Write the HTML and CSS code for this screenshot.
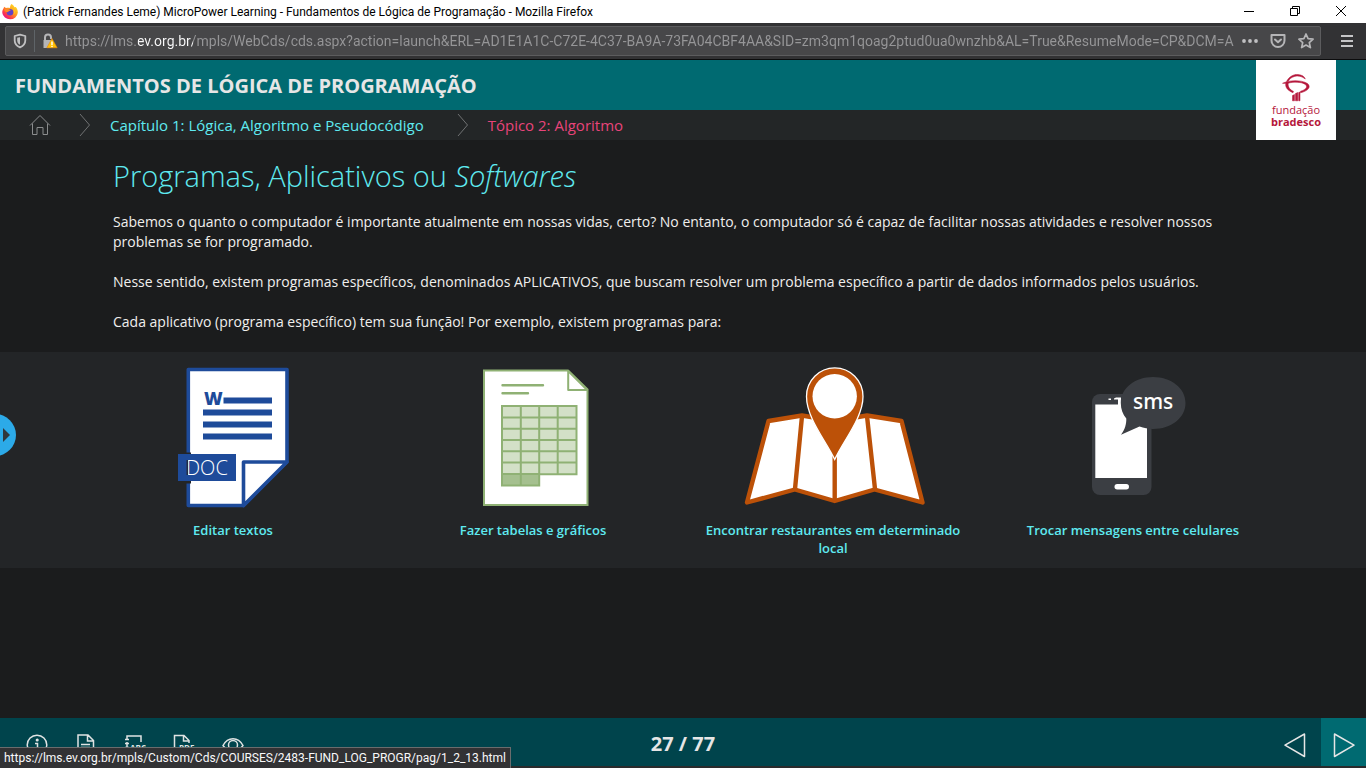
FILE: index.html
```html
<!DOCTYPE html>
<html lang="pt-BR">
<head>
<meta charset="utf-8">
<meta name="viewport" content="width=device-width, initial-scale=1">
<title>MicroPower Learning - Fundamentos de Lógica de Programação</title>
<link rel="stylesheet" href="styles.css">
</head>
<body class="window">
<div class="titlebar">
  <svg class="firefox" viewBox="0 0 16 16" aria-hidden="true">
    <defs>
      <linearGradient id="flame" x1="0.9" y1="0.1" x2="0.2" y2="0.9"><stop offset="0" stop-color="#ffe226"/><stop offset="0.45" stop-color="#ff9a1f"/><stop offset="0.8" stop-color="#ff3b47"/><stop offset="1" stop-color="#e31587"/></linearGradient>
    </defs>
    <path fill="url(#flame)" d="M9.500 0C11 1 12 2 12.600 3.300L13.800 3C15.200 4.700 16 6.500 15.800 8.800A7.800 7.200 0 0 1 .3 9C.1 7 .8 5.200 1.800 4L2 2.700 4 4C5.700 3.600 7 3.800 8 3.900 8 2.400 8.500 1 9.500 0Z"/>
    <circle cx="8" cy="8.300" r="3.300" fill="#6241c5"/>
    <path fill="#ff8b22" d="M2.300 5.200C5 4 7.500 5.200 8.800 6.400 7.300 6.500 6.500 7.500 5.200 8.300 3.500 8 2.300 7 2.300 5.200Z"/>
    <path fill="#ffc82a" d="M11 4.500C12.600 6 12.800 8.700 11.300 10.800 13.500 9.500 14 6.800 11 4.500Z"/>
  </svg>
  <span class="titlebar-text">(Patrick Fernandes Leme) MicroPower Learning - Fundamentos de Lógica de Programação - Mozilla Firefox</span>
  <div class="window-controls">
    <button type="button" aria-label="Minimizar"><svg viewBox="0 0 12 12"><path d="M1 6.500h10"/></svg></button>
    <button type="button" aria-label="Restaurar"><svg viewBox="0 0 12 12"><path d="M1.500 3.500h7v7h-7zM3.500 3.500v-2h7v7h-2"/></svg></button>
    <button type="button" aria-label="Fechar"><svg viewBox="0 0 12 12"><path d="M1 1l10 10M11 1L1 11"/></svg></button>
  </div>
</div>

<div class="toolbar">
  <div class="urlbar">
    <button type="button" class="tool shield" aria-label="Proteção contra rastreamento"><svg viewBox="0 0 16 16"><path fill="none" stroke="#c0c0c2" stroke-width="1.800" stroke-linejoin="round" d="M8 1.700L13.300 3v4.500c0 3-2 5.400-5.300 6.900-3.300-1.500-5.300-3.900-5.300-6.900V3z"/><path fill="#c0c0c2" d="M8 4.200v7.600C6 10.600 5.200 9.200 5.200 7.400V4.800z"/></svg></button>
    <button type="button" class="tool lock" aria-label="Informações do site"><svg viewBox="0 0 16 16"><path fill="none" stroke="#b5b5b7" stroke-width="2" d="M3 8V4.500a3 3 0 0 1 6 0V6"/><path fill="#b5b5b7" d="M1.500 7H11v8H1.500z"/><path fill="#ffbf00" stroke="#e5870b" stroke-width=".6" stroke-linejoin="round" d="M10 5.500l5.200 9.300H4.800z"/><path fill="#fff" d="M9.300 8.500h1.400V12H9.300zM9.300 12.800h1.400V14H9.300z"/></svg></button>
    <input class="url" type="text" aria-label="Endereço" value="https://lms.ev.org.br/mpls/WebCds/cds.aspx?action=launch&amp;ERL=AD1E1A1C-C72E-4C37-BA9A-73FA04CBF4AA&amp;SID=zm3qm1qoag2ptud0ua0wnzhb&amp;AL=True&amp;ResumeMode=CP&amp;DCM=A">
    <button type="button" class="tool" aria-label="Ações da página"><svg viewBox="0 0 16 16" fill="#c0c0c2"><circle cx="2" cy="8" r="1.900"/><circle cx="8" cy="8" r="1.900"/><circle cx="14" cy="8" r="1.900"/></svg></button>
    <button type="button" class="tool" aria-label="Salvar no Pocket"><svg viewBox="0 0 16 16" fill="none" stroke="#b5b5b7" stroke-width="2" stroke-linecap="round" stroke-linejoin="round"><path d="M1.500 2h13v5.500a6.500 6.500 0 0 1-13 0z"/><path d="M5 6.500l3 2.800 3-2.800"/></svg></button>
    <button type="button" class="tool" aria-label="Favoritar"><svg viewBox="0 0 16 16" fill="none" stroke="#b5b5b7" stroke-width="1.700" stroke-linejoin="round"><path d="M8 1l2.100 4.700 5 .5-3.800 3.400 1.100 5L8 12l-4.400 2.600 1.100-5L.9 6.200l5-.5z"/></svg></button>
  </div>
  <button type="button" class="tool menu" aria-label="Abrir menu"><svg viewBox="0 0 16 16" stroke="#c5c5c7" stroke-width="2"><path d="M2 3h12M2 8h12M2 13h12"/></svg></button>
</div>

<div class="course">
  <header class="course-header">
    <div class="course-title">FUNDAMENTOS DE LÓGICA DE PROGRAMAÇÃO</div>
    <nav class="crumbs" aria-label="Navegação estrutural">
      <a href="#inicio" class="home" aria-label="Início"><svg viewBox="0 0 22 22"><path d="M1 11.500L11 1.500l10 10M3.500 9.500v11h4.500v-7h6v7h4.500v-11"/></svg></a>
      <svg class="chevron" viewBox="0 0 12 24" aria-hidden="true"><path d="M1 1l9.500 11L1 23"/></svg>
      <a href="#capitulo-1" class="chapter">Capítulo 1: Lógica, Algoritmo e Pseudocódigo</a>
      <svg class="chevron chevron-last" viewBox="0 0 12 24" aria-hidden="true"><path d="M1 1l9.500 11L1 23"/></svg>
      <a href="#topico-2" class="topic" aria-current="page">Tópico 2: Algoritmo</a>
    </nav>
    <div class="brand">
      <svg class="brand-mark" viewBox="0 0 28 28" aria-hidden="true" fill="#b5173b" stroke="#b5173b" stroke-width=".5"><path d="M4.500 7.500C7 2.500 12 0 16 .5c3.500.3 6.500 1.800 7.300 4.500C20 2.200 16 1.500 12.500 2.500 9.500 3.300 7.500 5 6.200 7.300z"/><path d="M.5 9.300C7 6 19 5.500 25.500 9.500c4 3.500.5 7.500-7 9.300v-1.600c5-1.500 7.500-4 5.200-6.400C20 7.500 11 7.800 6.300 9.200c-.8 3.500 1.500 6.600 5.200 8.200l-.5 1.300C5.500 16.500 3 13 3.800 9.400z"/><path d="M10.500 21.500l2-1v6.300h-2zM13.500 19.500l2.300-1v8.300h-2.300zM16.700 18.500l1.300-.5v8.800h-1.300z"/></svg>
      <div class="brand-name"><span>fundação</span><strong>bradesco</strong></div>
    </div>
  </header>

  <main class="page">
    <section class="intro">
      <h1>Programas, Aplicativos ou <em>Softwares</em></h1>
      <p>Sabemos o quanto o computador é importante atualmente em nossas vidas, certo? No entanto, o computador só é capaz de facilitar nossas atividades e resolver nossos problemas se for programado.</p>
      <p>Nesse sentido, existem programas específicos, denominados APLICATIVOS, que buscam resolver um problema específico a partir de dados informados pelos usuários.</p>
      <p>Cada aplicativo (programa específico) tem sua função! Por exemplo, existem programas para:</p>
    </section>
    <section class="band">
      <div class="cards">
        <figure class="card">
          <svg class="art" viewBox="133 362 200 150" aria-hidden="true">
            <path fill="#fff" stroke="#1e4b9a" stroke-width="3.600" stroke-linejoin="round" d="M188.300 369.500h98.700v92L243.500 505.500h-55.200z"/>
            <path fill="#fff" stroke="#1e4b9a" stroke-width="3.600" stroke-linejoin="round" d="M243.500 505.500v-43.500h43.500z"/>
            <path fill="#1e4b9a" d="M223.500 397.500H272v6h-48.500zM203 409.500h69v6h-69zM203 421.500h69v6h-69zM203 433.500h69v6h-69z"/>
            <text x="204" y="405" class="word-mark">W</text>
            <path fill="#232527" d="M186 452.500h5v31h-5z"/>
            <path fill="#1e4b9a" d="M178 454h58v27h-58z"/>
            <text x="186" y="475" class="doc-mark">DOC</text>
            <path fill="#232c44" d="M186.500 460h1.500v15h-1.500z"/>
          </svg>
          <figcaption>Editar textos</figcaption>
        </figure>
        <figure class="card">
          <svg class="art" viewBox="433 362 200 150" aria-hidden="true">
            <path fill="#fff" stroke="#8fb174" stroke-width="2" d="M484 370.500h84l19.500 19v115.500H484z"/>
            <path fill="#fff" stroke="#8fb174" stroke-width="2" stroke-linejoin="round" d="M568.200 371v19h19z"/>
            <path fill="none" stroke="#8fb174" stroke-width="2.400" stroke-linecap="round" d="M502.500 385.300H543M502.500 393.300H528"/>
            <path fill="#d3e0c7" d="M502 406h74v68h-74z"/>
            <path fill="#a5c08f" d="M502 474h37v11h-37z"/>
            <path fill="none" stroke="#8fb174" stroke-width="2" d="M502 406h74.500v68.200h-37.300v11.300H502zM502 417.500h74M502 428.700h74M502 440h74M502 451.200h74M502 462.500h74M502 474h38M520.800 406v79M539.200 406v68M557.700 406v68"/>
          </svg>
          <figcaption>Fazer tabelas e gráficos</figcaption>
        </figure>
        <figure class="card">
          <svg class="art" viewBox="733 362 200 150" aria-hidden="true">
            <path fill="#fff" stroke="#bc5108" stroke-width="4.400" stroke-linejoin="round" d="M768.500 421L802 415.500l32.500 5.500 32.500-5.500 34.500 5.500L922.500 502.500 874.500 489.500 834.700 501 794.800 489.500 747 502.500z"/>
            <path fill="none" stroke="#bc5108" stroke-width="4.400" d="M802 416l-7 73M867 416l8 73M834.700 440v61"/>
            <path fill="#bc5108" stroke="#fff" stroke-width="1.300" d="M834.700 459.500C826 441 806.500 418 806.500 396.500a28.200 28.500 0 0 1 56.500 0C863 418 843 441 834.700 459.500z"/>
            <circle cx="834.700" cy="396.300" r="22.200" fill="#fff"/>
          </svg>
          <figcaption>Encontrar restaurantes em determinado local</figcaption>
        </figure>
        <figure class="card">
          <svg class="art" viewBox="1033 362 200 150" aria-hidden="true">
            <rect x="1092" y="394" width="59.500" height="101" rx="8" fill="#3b3e43"/>
            <path fill="#fff" d="M1095.300 404.500h51.700V478h-51.700z"/>
            <rect x="1114.500" y="484" width="14.500" height="5.500" rx="2.700" fill="#fff"/>
            <path fill="#fff" d="M1108.500 398.500h2.500v1.500h-2.500zM1114 398.500l2-1h5v9h-3v-7h-4z"/>
            <path fill="#3b3e43" d="M1153 377c18 0 32.500 11 32.500 26s-14.500 26-32.500 26c-5 0-9-1-13.500-2.500l-18.500 8.200c4-5 5.500-11 5.300-16.200-3.500-4-5.500-9.500-5.500-15.500 0-15 14.200-26 32.200-26z"/>
            <text x="1133" y="409" class="sms-mark">sms</text>
          </svg>
          <figcaption>Trocar mensagens entre celulares</figcaption>
        </figure>
      </div>
    </section>
    <button type="button" class="drawer" aria-label="Abrir menu lateral"><svg viewBox="0 0 8 14"><path d="M0 0l7 7-7 7z"/></svg></button>
  </main>

  <footer class="course-footer">
    <div class="tools">
      <button type="button" aria-label="Informações"><svg viewBox="0 0 22 22"><circle cx="11" cy="11" r="9.800"/><path d="M9 9.500h2.500v6M9 15.500h5"/><circle cx="11.200" cy="6" r=".8"/></svg></button>
      <button type="button" aria-label="Texto"><svg viewBox="0 0 22 22"><path d="M3 1h10l5.500 5.500V21H3zM12.500 1v6h6M6 10.500h9M6 13.500h9M6 16.500h9"/></svg></button>
      <button type="button" aria-label="Glossário"><svg viewBox="0 0 22 22"><path d="M3 6V2h14v6M3 8v13h14v-3M1 5.500h4M1 9.500h4M1 13.500h4M1 17.500h4"/><text x="6" y="17" class="tool-mark">ABC</text></svg></button>
      <button type="button" aria-label="PDF"><svg viewBox="0 0 22 22"><path d="M1.500 21V1.500h9.500l5 5V9M10.500 2v5H16"/><text x="6" y="17" class="tool-mark">PDF</text></svg></button>
      <button type="button" aria-label="Visualização"><svg viewBox="0 0 22 22"><path d="M1 11.500C6 2.500 16 2.500 21 11.500 16 19 6 19 1 11.500z"/><circle cx="11" cy="11" r="4.500"/></svg></button>
    </div>
    <div class="counter">27 / 77</div>
    <div class="pager">
      <button type="button" aria-label="Anterior"><svg viewBox="0 0 22 26"><path d="M20.500 2v22.500L1 13.200z"/></svg></button>
      <button type="button" class="next" aria-label="Próxima"><svg viewBox="0 0 22 26"><path d="M1.500 2v22.500L21 13.200z"/></svg></button>
    </div>
  </footer>
</div>
<div class="status">https://lms.ev.org.br/mpls/Custom/Cds/COURSES/2483-FUND_LOG_PROGR/pag/1_2_13.html</div>
</body>
</html>
```
FILE: styles.css
```css
* { box-sizing: border-box; }
.window {
  margin: 0;
  min-height: 100vh;
  display: flex;
  flex-direction: column;
  background: #1b1c1d;
  color: #f0efed;
  font-family: "Open Sans", "Noto Sans", sans-serif;
}
button { border: 0; padding: 0; background: none; color: inherit; font: inherit; }
a { text-decoration: none; color: inherit; }
svg { display: block; flex: none; }

.titlebar {
  display: flex;
  align-items: center;
  height: 23px;
  padding: 0 2px;
  background: #fff;
  color: #000;
  font-size: 12px;
  font-family: Roboto, "Open Sans", sans-serif;
}
.firefox { width: 16px; height: 16px; }
.titlebar-text { flex: 1; min-width: 0; padding-left: 5px; white-space: nowrap; overflow: hidden; }
.window-controls { display: flex; align-items: center; height: 100%; padding-bottom: 2px; }
.window-controls button { width: 46px; display: grid; place-items: center; }
.window-controls svg { width: 12px; height: 12px; fill: none; stroke: #000; stroke-width: 1; }

.toolbar {
  display: flex;
  align-items: center;
  height: 37px;
  padding: 0 11px 0 5px;
  background: #323234;
  border-bottom: 1px solid #0c0c0d;
}
.urlbar {
  flex: 1;
  min-width: 0;
  height: 30px;
  display: flex;
  align-items: center;
  gap: 12px;
  padding: 0 6px;
  background: #474749;
  border: 1px solid #5c5c5e;
  border-radius: 2px;
}
.tool svg { width: 16px; height: 16px; }
.shield { padding-right: 6px; border-right: 1px solid #5f6468; height: 22px; }
.lock { margin-left: -5px; }
.url {
  flex: 1;
  min-width: 0;
  border: 0;
  padding: 0;
  margin: 0 -6px 0 -5px;
  background: linear-gradient(90deg, #969698 73px, #f9f9fa 73px, #f9f9fa 128px, #969698 128px);
  -webkit-background-clip: text;
  background-clip: text;
  color: transparent;
  font: 14px Roboto, "Open Sans", sans-serif;
}
.menu { margin-left: 18px; }

.course { flex: 1; display: flex; flex-direction: column; padding-bottom: 2px; background: #2a2b2c; }
.course-header { position: relative; }
.course-title {
  padding: 1px 15px 0;
  background: #006a71;
  color: #e6e6e6;
  font-size: 20px;
  line-height: 50px;
  height: 50px;
  font-weight: 700;
}
.crumbs { display: flex; align-items: center; height: 30px; padding-left: 29px; background: #232627; font-size: 15px; }
.home svg { width: 22px; height: 22px; fill: none; stroke: #8b8d8e; stroke-width: 1; }
.chevron { width: 12px; height: 24px; margin: 0 19px 0 28px; fill: none; stroke: #707273; stroke-width: 1; }
.chevron-last { margin-left: 33px; }
.chapter { color: #5feaf0; }
.topic { color: #e8447a; }
.brand {
  position: absolute;
  top: 0;
  right: 30px;
  width: 80px;
  height: 80px;
  padding-top: 14px;
  display: flex;
  flex-direction: column;
  align-items: center;
  background: #fff;
  color: #b5173b;
}
.brand-mark { width: 28px; height: 28px; }
.brand-name { display: flex; flex-direction: column; align-items: center; font-size: 11px; line-height: 12px; padding-top: 2px; }

.page { flex: 1; position: relative; background: #1b1c1d; }
.intro { max-width: 1200px; margin: 0 auto; padding: 16px 30px 20px; }
.intro h1 { margin: 0 0 16px; color: #5feaf0; font-size: 29px; line-height: 40px; font-weight: 300; }
.intro p { margin: 0 0 20px; font-size: 14px; line-height: 20px; }
.intro p:last-child { margin-bottom: 0; }
.band { background: #232527; }
.cards { max-width: 1200px; margin: 0 auto; display: grid; grid-template-columns: repeat(4, 1fr); padding: 10px 0 11px; }
.card { margin: 0; padding: 0 15px; display: flex; flex-direction: column; align-items: center; gap: 9px; }
.art { width: 200px; height: 150px; }
.card figcaption { color: #5feaf0; font-size: 13px; line-height: 18px; font-weight: 600; text-align: center; }
.word-mark { font-size: 18px; font-weight: 800; fill: #1e4b9a; }
.doc-mark { font-size: 20px; font-weight: 300; fill: #fff; }
.sms-mark { font-family: "Noto Sans", sans-serif; font-size: 21px; font-weight: 500; fill: #fff; }
.drawer {
  position: absolute;
  left: -26px;
  top: 274px;
  width: 42px;
  height: 42px;
  padding-left: 29px;
  border-radius: 50%;
  background: #2caae8;
}
.drawer svg { width: 8px; height: 14px; fill: #30373c; }

.course-footer {
  display: grid;
  grid-template-columns: 1fr auto 1fr;
  align-items: center;
  height: 48px;
  background: #00444c;
}
.tools { display: flex; gap: 27px; padding: 6px 0 0 26px; }
.tools svg { width: 22px; height: 22px; fill: none; stroke: #dfe3e3; stroke-width: 1.5; }
.tools .tool-mark { font-size: 8px; font-weight: 700; fill: #dfe3e3; stroke: none; }
.counter { color: #e6e6e6; font-size: 20px; font-weight: 700; padding-top: 3px; }
.pager { display: flex; justify-content: flex-end; height: 48px; }
.pager button { width: 45px; padding-top: 6px; display: grid; place-items: center; }
.pager button:first-child { width: 53px; }
.pager .next { background: #006a71; }
.pager svg { width: 22px; height: 26px; fill: none; stroke: #e6e6e6; stroke-width: 1.5; stroke-linejoin: round; }

.status {
  position: fixed;
  left: 0;
  bottom: 0;
  height: 21px;
  padding: 0 4px;
  background: #323234;
  border: 1px solid #6a6c6d;
  border-width: 1px 1px 0 0;
  color: #f9f9fa;
  font: 12px/21px Roboto, "Open Sans", sans-serif;
  white-space: nowrap;
}
```
